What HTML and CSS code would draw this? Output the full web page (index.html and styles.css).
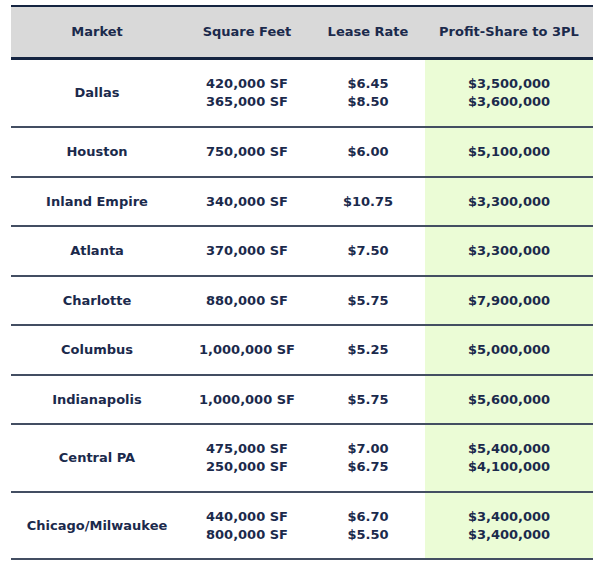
FILE: index.html
```html
<!DOCTYPE html>
<html lang="en">
<head>
<meta charset="utf-8">
<title>3PL Markets</title>
<link rel="stylesheet" href="styles.css">
</head>
<body>
<div class="table">
  <div class="row head">
    <div class="cell">Market</div>
    <div class="cell">Square Feet</div>
    <div class="cell">Lease Rate</div>
    <div class="cell">Profit-Share to 3PL</div>
  </div>
  <div class="row double">
    <div class="cell">Dallas</div>
    <div class="cell"><span>420,000 SF</span><span>365,000 SF</span></div>
    <div class="cell"><span>$6.45</span><span>$8.50</span></div>
    <div class="cell green"><span>$3,500,000</span><span>$3,600,000</span></div>
  </div>
  <div class="row">
    <div class="cell">Houston</div>
    <div class="cell">750,000 SF</div>
    <div class="cell">$6.00</div>
    <div class="cell green">$5,100,000</div>
  </div>
  <div class="row odd">
    <div class="cell">Inland Empire</div>
    <div class="cell">340,000 SF</div>
    <div class="cell">$10.75</div>
    <div class="cell green">$3,300,000</div>
  </div>
  <div class="row">
    <div class="cell">Atlanta</div>
    <div class="cell">370,000 SF</div>
    <div class="cell">$7.50</div>
    <div class="cell green">$3,300,000</div>
  </div>
  <div class="row odd">
    <div class="cell">Charlotte</div>
    <div class="cell">880,000 SF</div>
    <div class="cell">$5.75</div>
    <div class="cell green">$7,900,000</div>
  </div>
  <div class="row">
    <div class="cell">Columbus</div>
    <div class="cell">1,000,000 SF</div>
    <div class="cell">$5.25</div>
    <div class="cell green">$5,000,000</div>
  </div>
  <div class="row odd">
    <div class="cell">Indianapolis</div>
    <div class="cell">1,000,000 SF</div>
    <div class="cell">$5.75</div>
    <div class="cell green">$5,600,000</div>
  </div>
  <div class="row double">
    <div class="cell">Central PA</div>
    <div class="cell"><span>475,000 SF</span><span>250,000 SF</span></div>
    <div class="cell"><span>$7.00</span><span>$6.75</span></div>
    <div class="cell green"><span>$5,400,000</span><span>$4,100,000</span></div>
  </div>
  <div class="row double last">
    <div class="cell">Chicago/Milwaukee</div>
    <div class="cell"><span>440,000 SF</span><span>800,000 SF</span></div>
    <div class="cell"><span>$6.70</span><span>$5.50</span></div>
    <div class="cell green"><span>$3,400,000</span><span>$3,400,000</span></div>
  </div>
</div>
</body>
</html>
```

FILE: styles.css
```css
html, body {
  margin: 0;
  padding: 0;
  background: #ffffff;
}

body {
  font-family: "DejaVu Sans", "Liberation Sans", sans-serif;
  font-weight: 700;
  font-size: 13px;
  color: #1b2a4c;
}

.table {
  width: 582px;
  margin: 5px 0 0 11px;
  border-top: 2px solid #152441;
}

.row {
  display: grid;
  grid-template-columns: 172px 128px 114px 168px;
  height: 48px;
  border-bottom: 2px solid #434e62;
}

.row.odd {
  height: 47px;
}

.row.double {
  height: 66px;
}

.row.double.last {
  height: 65px;
}

.row.head {
  height: 50px;
  background: #d9d9d9;
  border-bottom: 3px solid #152441;
}

.cell {
  display: flex;
  flex-direction: column;
  align-items: center;
  justify-content: center;
  line-height: 18px;
  white-space: nowrap;
}

.green {
  background: #ebfcd6;
}
```
